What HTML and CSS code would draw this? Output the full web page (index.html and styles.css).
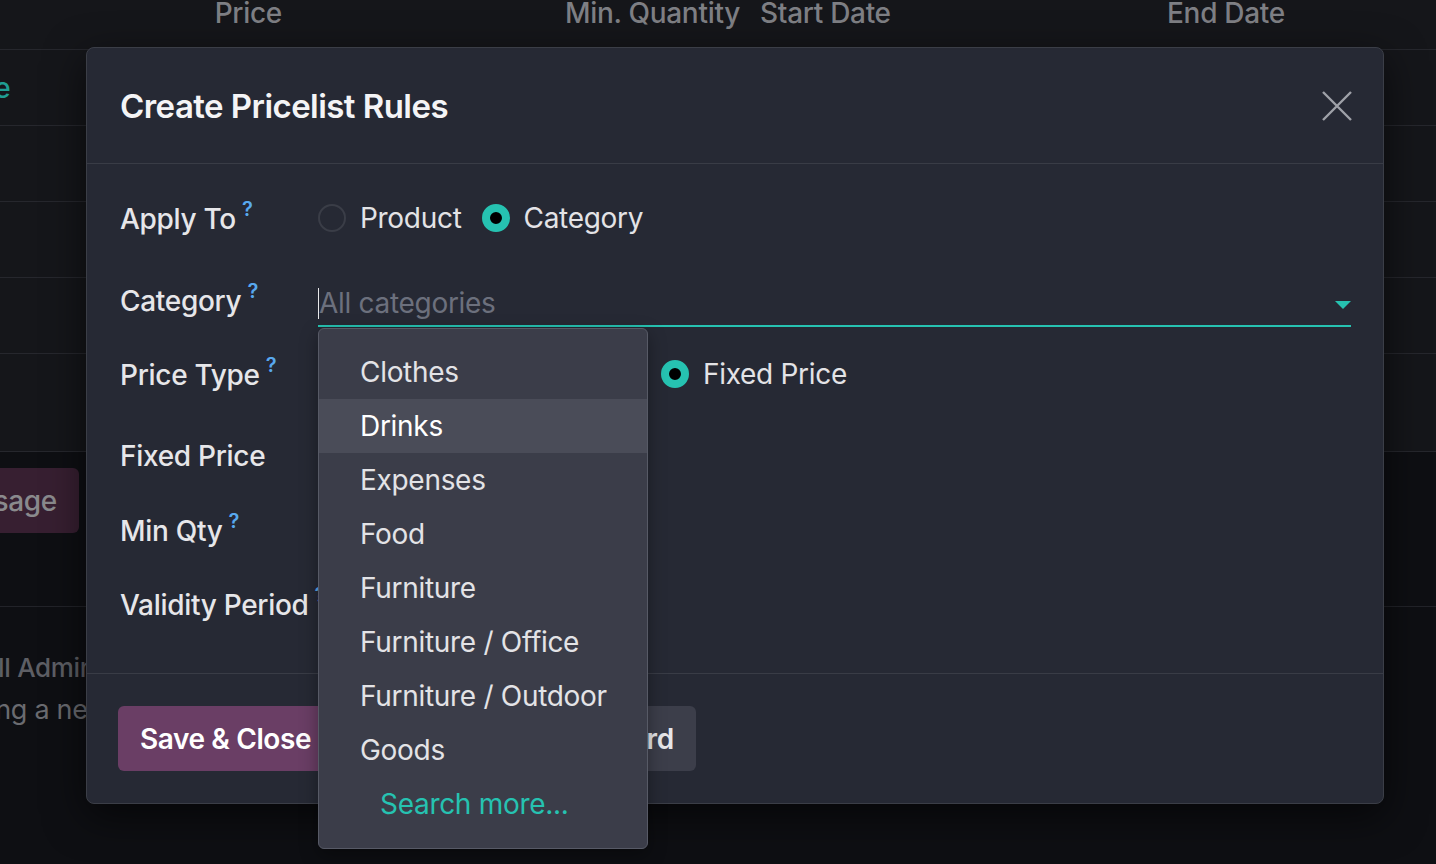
FILE: index.html
```html
<!DOCTYPE html>
<html lang="en">
<head>
<meta charset="utf-8">
<title>Create Pricelist Rules</title>
<link rel="stylesheet" href="styles.css">
</head>
<body>
  <div class="page">
    <div class="thead">
      <div class="th th-price">Price</div>
      <div class="th th-qty">Min. Quantity</div>
      <div class="th th-start">Start Date</div>
      <div class="th th-end">End Date</div>
    </div>
    <div class="trow"><span class="teal-frag">Sale</span></div>
    <div class="trow"></div>
    <div class="trow"></div>
    <div class="trow"></div>
    <div class="trow trow-last"></div>
    <div class="chatter">
      <div class="send-wrap"><button class="btn-send">Send message</button></div>
      <div class="chatter-line"></div>
      <div class="msg-author">Mitchell Admin</div>
      <div class="msg-body">Creating a new record...</div>
    </div>
  </div>

  <div class="modal">
    <div class="modal-header">
      <h4 class="modal-title">Create Pricelist Rules</h4>
      <button class="btn-close" aria-label="Close">
        <svg width="30" height="30" viewBox="0 0 30 30"><path d="M1 1 L29 29 M29 1 L1 29" stroke="#9fa1a8" stroke-width="2.4" fill="none"/></svg>
      </button>
    </div>
    <div class="modal-body">
      <div class="frow r1">
        <label class="flabel">Apply To<sup class="help">?</sup></label>
        <div class="radios">
          <span class="opt"><span class="radio"></span>Product</span>
          <span class="opt"><span class="radio on"></span>Category</span>
        </div>
      </div>
      <div class="frow r2">
        <label class="flabel">Category<sup class="help">?</sup></label>
        <div class="m2o">
          <span class="caret"></span>
          <span class="placeholder">All categories</span>
          <span class="tri"></span>
          <ul class="dropdown">
            <li>Clothes</li>
            <li class="active">Drinks</li>
            <li>Expenses</li>
            <li>Food</li>
            <li>Furniture</li>
            <li>Furniture / Office</li>
            <li>Furniture / Outdoor</li>
            <li>Goods</li>
            <li class="more">Search more...</li>
          </ul>
        </div>
      </div>
      <div class="frow r3">
        <label class="flabel">Price Type<sup class="help">?</sup></label>
        <div class="radios">
          <span class="opt opt-w1"><span class="radio"></span>Discount</span>
          <span class="opt opt-w2"><span class="radio"></span>Formula</span>
          <span class="opt"><span class="radio on"></span>Fixed Price</span>
        </div>
      </div>
      <div class="frow r4">
        <label class="flabel">Fixed Price</label>
        <div class="value"></div>
      </div>
      <div class="frow r5">
        <label class="flabel">Min Qty<sup class="help">?</sup></label>
        <div class="value"></div>
      </div>
      <div class="frow r6">
        <label class="flabel nowrap">Validity Period<sup class="help">?</sup></label>
        <div class="value"></div>
      </div>
    </div>
    <div class="modal-footer">
      <button class="btn btn-primary">Save &amp; Close</button>
      <button class="btn btn-primary">Save &amp; New</button>
      <button class="btn btn-secondary">Discard</button>
    </div>
  </div>
</body>
</html>
```

FILE: styles.css
```css
* { box-sizing: border-box; }
html, body {
  margin: 0;
  padding: 0;
  width: 1436px;
  height: 864px;
  overflow: hidden;
}
body {
  background: #0e0f13;
  font-family: "Inter", "Noto Sans", sans-serif;
  font-size: 28px;
  letter-spacing: -0.3px;
  color: #e3e3e6;
  position: relative;
}

/* ---------- background page ---------- */
.page {
  margin-top: -2px;
  background: #0e0f13;
}
.thead {
  display: flex;
  height: 52px;
  background: #15161a;
  border-bottom: 1px solid #26272d;
  color: #7e7f84;
  font-weight: 500;
  line-height: 30px;
}
.th-price { width: 282px; text-align: right; }
.th-qty { width: 458px; text-align: right; }
.th-start { width: 427px; padding-left: 20px; }
.th-end { flex: 1; }
.trow {
  height: 76px;
  background: #15161a;
  border-bottom: 1px solid #26272d;
  display: flex;
  align-items: center;
  overflow: hidden;
}
.trow-last { height: 98px; }
.teal-frag {
  color: #1f9d92;
  margin-left: -46px;
  font-weight: 500;
}
.chatter {
  padding-top: 16px;
}
.send-wrap {
  width: 79px;
  display: flex;
  justify-content: flex-end;
}
.btn-send {
  flex: none;
  height: 65px;
  padding: 0 22px;
  border: 0;
  border-radius: 6px;
  background: #371f31;
  color: #8a8a8d;
  font: 500 28px "Inter", "Noto Sans", sans-serif;
  letter-spacing: -0.3px;
  white-space: nowrap;
}
.chatter-line {
  margin-top: 73px;
  border-top: 1px solid #222329;
}
.msg-author {
  margin-top: 44px;
  text-indent: -85px;
  white-space: nowrap;
  color: #5e5f65;
  font-weight: 500;
  font-size: 26px;
  line-height: 34px;
}
.msg-body {
  margin-top: 8px;
  text-indent: -79px;
  white-space: nowrap;
  color: #6a6b70;
  font-size: 27px;
  line-height: 34px;
}

/* ---------- modal ---------- */
.modal {
  position: absolute;
  left: 86px;
  top: 47px;
  width: 1298px;
  height: 757px;
  display: flex;
  flex-direction: column;
  background: #262934;
  border: 1px solid #3b3e47;
  border-radius: 8px;
  box-shadow: 0 12px 40px rgba(0, 0, 0, 0.6);
}
.modal-header {
  height: 116px;
  flex: none;
  display: flex;
  align-items: center;
  justify-content: space-between;
  padding: 0 31px 0 33px;
  border-bottom: 1px solid #393c46;
}
.modal-title {
  margin: 0;
  font-size: 33px;
  font-weight: 600;
  color: #f4f4f6;
  letter-spacing: -0.55px;
}
.btn-close {
  border: 0;
  background: none;
  padding: 0;
  width: 30px;
  height: 30px;
  display: flex;
}
.modal-body {
  flex: 1;
  padding: 17px 32px 0 33px;
}
.frow {
  display: grid;
  grid-template-columns: 198px 1fr;
  align-items: center;
  height: 74px;
}
.r2, .r4 { margin-top: 8px; }
.flabel {
  font-weight: 500;
  color: #e6e6e9;
  white-space: nowrap;
}
.help {
  color: #58a8ee;
  font-size: 20px;
  font-weight: 600;
  margin-left: 6px;
  position: relative;
  top: -3px;
}
.radios {
  display: flex;
  align-items: center;
  gap: 20px;
}
.opt {
  display: flex;
  align-items: center;
  gap: 14px;
  color: #e3e3e6;
}
.opt-w1 { width: 152px; }
.opt-w2 { width: 151px; }
.radio {
  width: 28px;
  height: 28px;
  border-radius: 50%;
  border: 2px solid #3a3d47;
  background: #262934;
  flex: none;
}
.radio.on {
  border: 8px solid #26c2b1;
  background: #000;
}

/* many2one input */
.r2 { align-items: end; }
.r2 .flabel { align-self: center; }
.m2o {
  position: relative;
  height: 46px;
  margin-bottom: 10px;
  border-bottom: 2px solid #26c2b1;
  display: flex;
  align-items: center;
}
.caret {
  width: 1px;
  height: 31px;
  background: #e8e8ea;
  flex: none;
}
.placeholder {
  color: #6c707d;
  flex: 1;
}
.tri {
  width: 0;
  height: 0;
  border-left: 8px solid transparent;
  border-right: 8px solid transparent;
  border-top: 8px solid #26c2b1;
  margin-top: 4px;
}
.dropdown {
  position: absolute;
  left: 0;
  top: calc(100% + 3px);
  width: 330px;
  margin: 0;
  padding: 16px 0 17px;
  list-style: none;
  background: #3b3d49;
  border: 1px solid #575a66;
  border-radius: 6px;
  box-shadow: 0 6px 18px rgba(0, 0, 0, 0.35);
  z-index: 5;
}
.dropdown li {
  height: 54px;
  line-height: 54px;
  padding-left: 41px;
  color: #e3e3e6;
  white-space: nowrap;
}
.dropdown li.active {
  background: #4a4c58;
  color: #ffffff;
}
.dropdown li.more {
  color: #26c2b1;
  padding-left: 61px;
}

/* footer */
.modal-footer {
  height: 130px;
  flex: none;
  border-top: 1px solid #393c46;
  display: flex;
  align-items: flex-start;
  gap: 9px;
  padding: 32px 32px 0 31px;
}
.btn {
  height: 65px;
  padding: 0 22px;
  border: 0;
  border-radius: 6px;
  font: 600 28px "Inter", "Noto Sans", sans-serif;
  letter-spacing: -0.4px;
  white-space: nowrap;
}
.btn-primary {
  background: #6a3e65;
  color: #ffffff;
}
.btn-secondary {
  background: #3c3e4a;
  color: #e6e6e9;
}
```
